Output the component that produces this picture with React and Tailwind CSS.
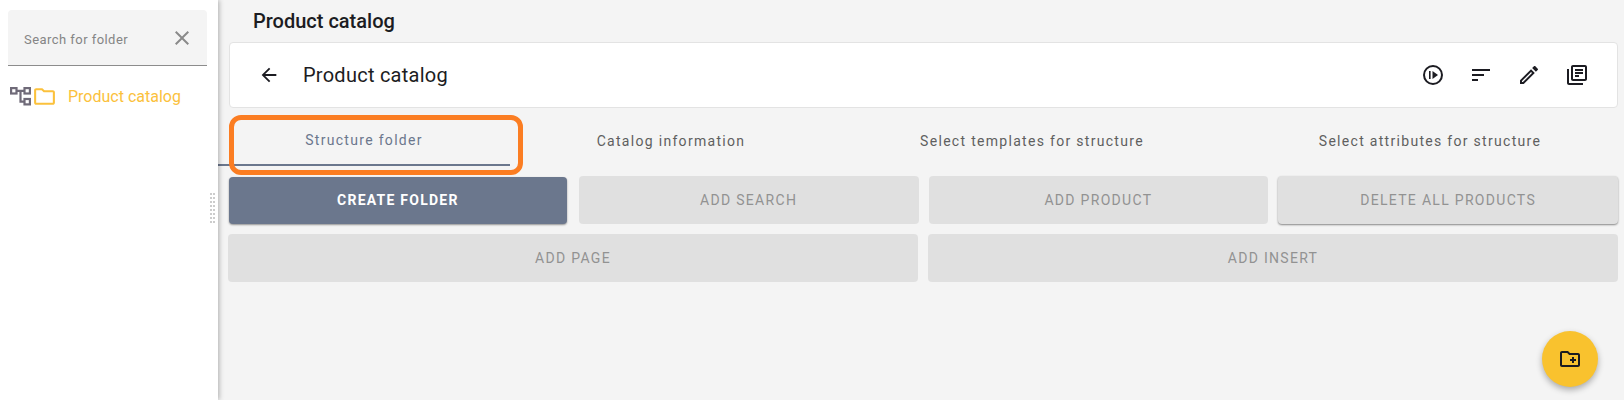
import { MdArrowBack, MdClose, MdSort, MdOutlineEdit, MdOutlineLibraryBooks, MdOutlineCreateNewFolder, MdOutlineFolder } from 'react-icons/md';

const tabs = [
  { label: 'Structure folder', width: 'w-[292px]', active: true },
  { label: 'Catalog information', width: 'w-[322px]' },
  { label: 'Select templates for structure', width: 'w-[400px]' },
  { label: 'Select attributes for structure', width: 'w-[396px]' },
];

function TreeIcon() {
  return (
    <svg width="21" height="19" viewBox="0 0 21 19" fill="none" stroke="#6f6a78" strokeWidth="2.2">
      <rect x="1.1" y="1.1" width="5.4" height="5.4" />
      <rect x="14.5" y="1.1" width="5.4" height="5.4" />
      <rect x="14.5" y="12" width="5.4" height="5.4" />
      <path d="M6.5 3.8h8M10.5 3.8v10.9h4" />
    </svg>
  );
}

function PlayCircleIcon() {
  return (
    <svg width="24" height="24" viewBox="0 0 24 24" fill="none">
      <circle cx="12" cy="12" r="9" stroke="#1c1c22" strokeWidth="2" />
      <rect x="8" y="8" width="1.6" height="8" fill="#1c1c22" />
      <path d="M11.5 8l5.5 4-5.5 4z" fill="#1c1c22" />
    </svg>
  );
}

function GreyButton({ children, raised }) {
  return (
    <button className={`h-[48px] rounded bg-[#e0e0e0] text-[14px] font-[450] tracking-[1.3px] text-[#929292] ${raised ? 'shadow-[0_1px_2px_rgba(0,0,0,0.45)]' : ''}`}>
      {children}
    </button>
  );
}

export default function App() {
  return (
    <div className="flex h-[400px] w-[1624px] overflow-hidden bg-[#f4f4f4] font-['Roboto',sans-serif]">
      <aside className="relative z-10 h-full w-[218px] shrink-0 bg-white px-2 pt-[10px] shadow-[1px_0_5px_rgba(0,0,0,0.3)]">
        <div className="flex h-[56px] w-[199px] items-center justify-between rounded-t border-b border-[#8c8c8c] bg-[#f4f4f4] pl-4 pr-[13px]">
          <span className="pt-1 text-[13px] tracking-[0.45px] text-[#858585]">Search for folder</span>
          <MdClose size={24} className="text-[#8a8a8a]" />
        </div>
        <div className="mt-[18px] flex items-center">
          <span className="ml-[2px]"><TreeIcon /></span>
          <MdOutlineFolder size={25} className="ml-[1px] text-[#fbc13c]" />
          <span className="ml-[11px] text-[16px] text-[#fbc13c]">Product catalog</span>
        </div>
        {/* resize grip */}
        <div className="absolute left-[210px] top-[193px] grid grid-cols-[2px_2px] gap-x-px gap-y-[2px]">
          {Array.from({ length: 16 }).map((_, i) => (
            <span key={i} className="h-[2px] w-[2px] bg-[#cccccc]" />
          ))}
        </div>
      </aside>

      <main className="relative flex-1">
        <h1 className="pl-[35px] pt-[9px] text-[20px] font-medium leading-[24px] text-[#1c1c22]">Product catalog</h1>

        <div className="ml-[11px] mt-[9px] flex h-[66px] w-[1389px] items-center rounded-sm border border-[#e3e3e3] bg-white pl-[28px] pr-[28px]">
          <MdArrowBack size={22} className="text-[#1c1c22]" />
          <span className="ml-[23px] flex-1 text-[20px] font-[450] tracking-[0.25px] text-[#1c1c22]">Product catalog</span>
          <div className="flex items-center gap-[24px]">
            <PlayCircleIcon />
            <MdSort size={24} className="text-[#1c1c22]" />
            <MdOutlineEdit size={24} className="text-[#1c1c22]" />
            <MdOutlineLibraryBooks size={24} className="text-[#1c1c22]" />
          </div>
        </div>

        <div className="relative flex h-[58px]">
          {tabs.map((tab) => (
            <div
              key={tab.label}
              className={`flex h-[58px] shrink-0 items-center justify-center pt-2 text-[14px] font-[450] tracking-[1.3px] ${tab.width} ${tab.active ? 'border-b-2 border-[#6b778d] text-[#6b778d]' : 'text-[#5f5f5f]'}`}
            >
              {tab.label}
            </div>
          ))}
          <div className="pointer-events-none absolute left-[11px] top-[7px] h-[60px] w-[294px] rounded-xl border-[5px] border-[#fb7d22]" />
        </div>

        <div className="ml-[11px] mt-[10px] w-[1389px]">
          <div className="grid grid-cols-4 gap-[10px]">
            <button className="mr-[2px] mt-px h-[47px] rounded bg-[#6b778d] text-[14px] font-bold tracking-[1.25px] text-white shadow-[0_1px_2px_rgba(0,0,0,0.4)]">CREATE FOLDER</button>
            <GreyButton>ADD SEARCH</GreyButton>
            <GreyButton>ADD PRODUCT</GreyButton>
            <GreyButton raised>DELETE ALL PRODUCTS</GreyButton>
          </div>
          <div className="-ml-px mt-[10px] grid grid-cols-2 gap-[10px]">
            <GreyButton>ADD PAGE</GreyButton>
            <GreyButton>ADD INSERT</GreyButton>
          </div>
        </div>

        <button className="absolute left-[1324px] top-[331px] flex h-[56px] w-[56px] items-center justify-center rounded-full bg-[#f9c22e] shadow-[0_3px_6px_rgba(0,0,0,0.3)]">
          <MdOutlineCreateNewFolder size={24} className="text-[#1c1c22]" />
        </button>
      </main>
    </div>
  );
}
